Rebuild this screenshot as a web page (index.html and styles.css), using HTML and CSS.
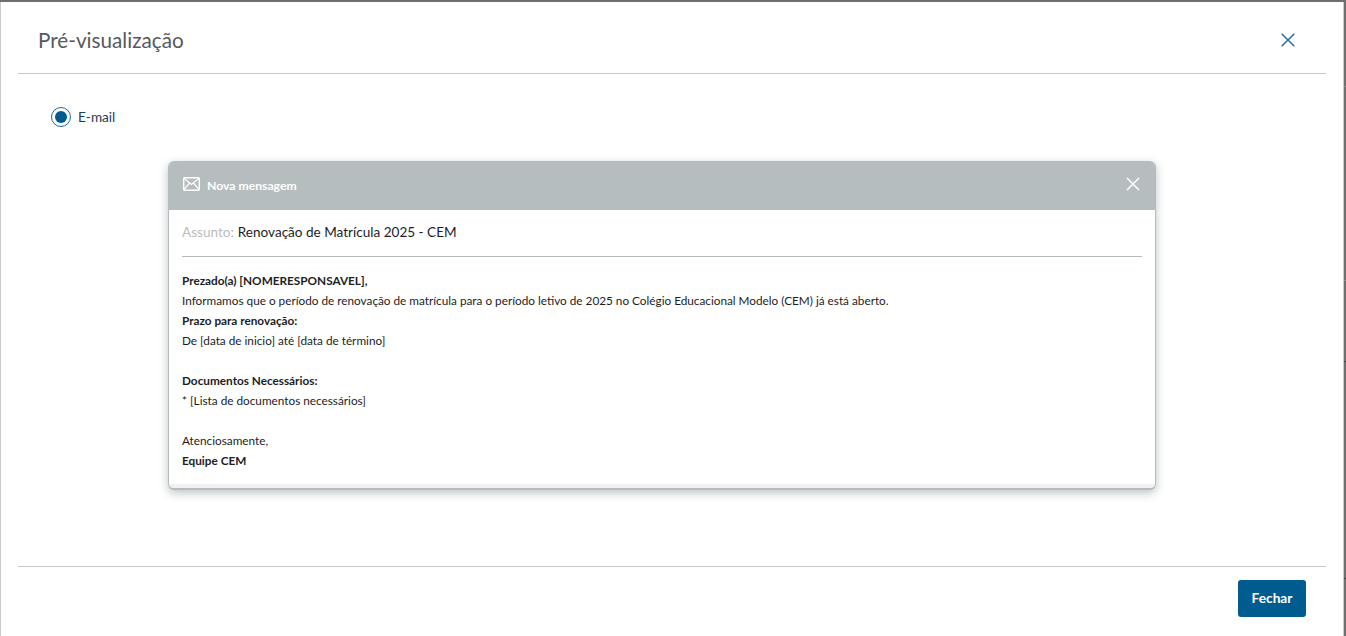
FILE: index.html
```html
<!DOCTYPE html>
<html lang="pt-BR">
<head>
<meta charset="utf-8">
<title>Pré-visualização</title>
<link rel="stylesheet" href="styles.css">
</head>
<body>
<i class="tick tick-a"></i><i class="tick tick-b"></i><i class="tick tick-c"></i><i class="tick tick-d"></i>
<div class="modal">
  <header class="modal-head">
    <h1 class="modal-title">Pré-visualização</h1>
    <button class="modal-close" aria-label="Fechar">
      <svg width="14" height="14" viewBox="0 0 14 14"><path d="M.7.7l12.6 12.6M13.3.7L.7 13.3" fill="none" stroke="#1a6a9e" stroke-width="1.4"/></svg>
    </button>
  </header>
  <main class="modal-body">
    <label class="radio">
      <span class="radio-ring"><span class="radio-dot"></span></span>
      <span class="radio-label">E-mail</span>
    </label>
    <section class="mail">
      <div class="mail-head">
        <svg class="mail-icon" width="17" height="14" viewBox="0 0 17 14"><rect x=".7" y=".7" width="15.600" height="12.600" rx="1" fill="none" stroke="#fff" stroke-width="1.400"/><path d="M1 1.300l7.500 6.200 7.500-6.200M1 12.700l5.500-6.700M16 12.700L10.500 6" fill="none" stroke="#fff" stroke-width="1.200"/></svg>
        <span class="mail-head-title">Nova mensagem</span>
        <svg class="mail-close" width="14" height="14" viewBox="0 0 14 14"><path d="M1 1l12 12M13 1L1 13" fill="none" stroke="#fff" stroke-width="1.500"/></svg>
      </div>
      <div class="mail-subject"><span class="mail-subject-key">Assunto:</span> Renovação de Matrícula 2025 - CEM</div>
      <div class="mail-text">
        <p><b>Prezado(a) [NOMERESPONSAVEL],</b></p>
        <p>Informamos que o período de renovação de matrícula para o período letivo de 2025 no Colégio Educacional Modelo (CEM) já está aberto.</p>
        <p><b>Prazo para renovação:</b></p>
        <p>De [data de inicio] até [data de término]</p>
        <p>&nbsp;</p>
        <p><b>Documentos Necessários:</b></p>
        <p>* [Lista de documentos necessários]</p>
        <p>&nbsp;</p>
        <p>Atenciosamente,</p>
        <p><b>Equipe CEM</b></p>
      </div>
      <div class="mail-foot"></div>
    </section>
  </main>
  <footer class="modal-foot">
    <button class="btn">Fechar</button>
  </footer>
</div>
</body>
</html>
```
FILE: styles.css
```css
* { box-sizing: border-box; }
html, body { height: 100%; }
body {
  margin: 0;
  background: #6f6f6f;
  overflow: hidden;
  font-family: "Lato", "Open Sans", sans-serif;
  padding: 2px 2px 0 0;
  position: relative;
}
.tick {
  position: absolute;
  right: 0;
  width: 2px;
  height: 1px;
  background: #8a8a8a;
}
.tick-a { top: 86px; }
.tick-b { top: 280px; }
.tick-c { top: 361px; background: #444; }
.tick-d { top: 578px; background: #444; }
.modal {
  height: 634px;
  background: #fff;
  display: flex;
  flex-direction: column;
  padding: 0 17px;
  border-left: 1px solid #cccccc;
  border-right: 1px solid #cccccc;
}
.modal-head {
  height: 72px;
  flex: none;
  display: flex;
  align-items: center;
  justify-content: space-between;
  padding: 5px 31px 0 20px;
  border-bottom: 1px solid #c8c8c8;
}
.modal-title {
  margin: 0;
  font-size: 20.700px;
  font-weight: 400;
  color: #58595b;
}
.modal-close {
  border: 0;
  background: none;
  padding: 0;
  display: flex;
}
.modal-body {
  flex: 1;
  padding: 33px 0 0 33px;
}
.radio {
  display: flex;
  align-items: center;
  gap: 7px;
  height: 20px;
}
.radio-ring {
  width: 20px;
  height: 20px;
  border: 1px solid #1a6a9e;
  border-radius: 50%;
  display: flex;
  align-items: center;
  justify-content: center;
}
.radio-dot {
  width: 12px;
  height: 12px;
  border-radius: 50%;
  background: #005b8e;
}
.radio-label {
  font-size: 13.600px;
  color: #1c3d57;
}
.mail {
  width: 988px;
  margin: 34px 0 0 117px;
  border-radius: 6px;
  background: #fff;
  border-right: 1px solid #b5bcbd;
  border-left: 1px solid #b5bcbd;
  border-bottom: 2px solid #b5bcbd;
  box-shadow: 0 3px 10px rgba(90, 105, 110, .4);
  overflow: hidden;
}
.mail-head {
  height: 49px;
  background: #b6bdbe;
  display: flex;
  align-items: center;
  padding: 0 15px 0 14px;
  color: #fff;
}
.mail-icon { flex: none; margin: 0 7px 3px 0; }
.mail-head-title {
  flex: 1;
  font-size: 12.200px;
  font-weight: 700;
}
.mail-close { margin-bottom: 3px; }
.mail-subject {
  margin: 0 13px;
  height: 47px;
  padding-bottom: 3px;
  display: flex;
  align-items: center;
  gap: 4px;
  font-size: 13.550px;
  color: #1d1d1d;
  border-bottom: 1px solid #b5bcbd;
}
.mail-subject-key { color: #bcbcbc; }
.mail-text {
  padding: 14px 13px 13px;
  font-size: 11.770px;
  color: #1d1d1d;
  line-height: 20px;
}
.mail-text p { margin: 0; }
.mail-foot {
  height: 4px;
  background: #f0f0f0;
}
.modal-foot {
  height: 70px;
  flex: none;
  display: flex;
  justify-content: flex-end;
  align-items: flex-start;
  padding: 13px 20px 0 0;
  border-top: 1px solid #c8c8c8;
}
.btn {
  width: 68px;
  height: 37px;
  border: 0;
  border-radius: 3px;
  background: #005b8e;
  color: #fff;
  font-family: inherit;
  font-size: 13.700px;
  font-weight: 700;
  padding: 0 0 3px;
}
```
